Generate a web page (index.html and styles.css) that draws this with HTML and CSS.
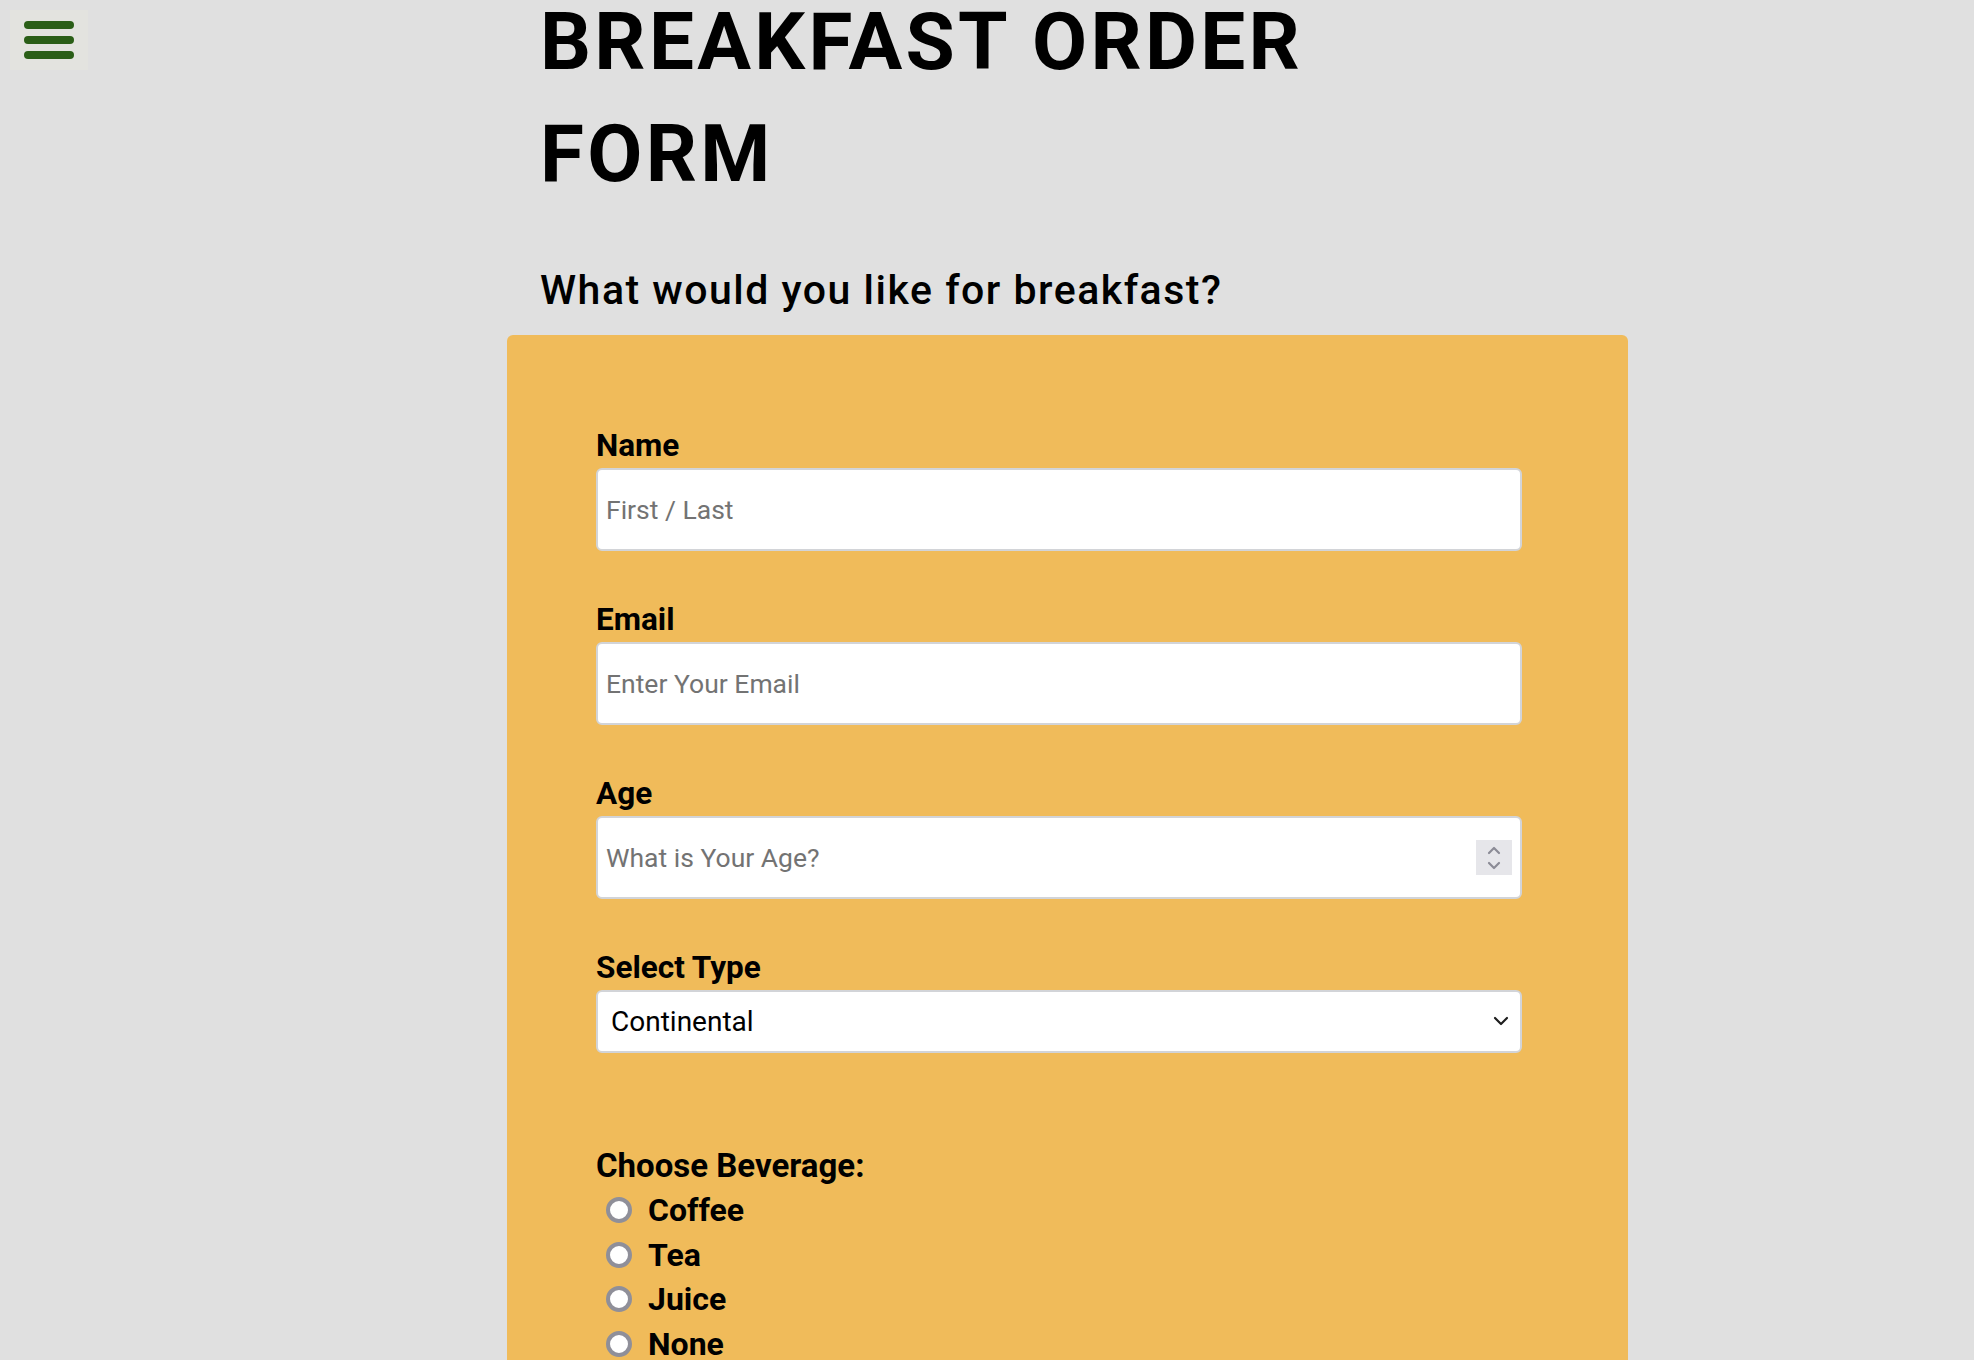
FILE: index.html
```html
<!DOCTYPE html>
<html lang="en">
<head>
<meta charset="utf-8">
<title>Breakfast Order Form</title>
<link rel="stylesheet" href="styles.css">
</head>
<body>
<button class="menu-btn" type="button" aria-label="Menu">
  <span class="menu-bar"></span>
  <span class="menu-bar"></span>
  <span class="menu-bar"></span>
</button>
<main class="page">
  <header class="intro">
    <h1 class="title">BREAKFAST ORDER FORM</h1>
    <h2 class="subtitle">What would you like for breakfast?</h2>
  </header>
  <form class="order-card">
    <div class="field">
      <label class="field-label" for="name">Name</label>
      <input class="text-input" id="name" type="text" placeholder="First / Last">
    </div>
    <div class="field">
      <label class="field-label" for="email">Email</label>
      <input class="text-input" id="email" type="email" placeholder="Enter Your Email">
    </div>
    <div class="field">
      <label class="field-label" for="age">Age</label>
      <div class="input-wrap">
        <input class="text-input number-input" id="age" type="number" placeholder="What is Your Age?">
        <span class="spinner" aria-hidden="true">
          <svg width="16" height="26" viewBox="0 0 16 26"><path d="M3 8 L8 3 L13 8 M3 18 L8 23 L13 18" fill="none" stroke="#8b8b96" stroke-width="2.2" stroke-linecap="round" stroke-linejoin="round"/></svg>
        </span>
      </div>
    </div>
    <div class="field">
      <label class="field-label" for="type">Select Type</label>
      <div class="input-wrap">
        <select class="select-input" id="type">
          <option>Continental</option>
          <option>American</option>
          <option>English</option>
        </select>
        <span class="select-arrow" aria-hidden="true">
          <svg width="16" height="10" viewBox="0 0 16 10"><path d="M2 2 L8 8 L14 2" fill="none" stroke="#1e1e1e" stroke-width="2.2" stroke-linecap="round" stroke-linejoin="round"/></svg>
        </span>
      </div>
    </div>
    <div class="choice-group">
      <p class="group-label">Choose Beverage:</p>
      <label class="choice"><input class="radio" type="radio" name="bev" value="coffee"><span>Coffee</span></label>
      <label class="choice"><input class="radio" type="radio" name="bev" value="tea"><span>Tea</span></label>
      <label class="choice"><input class="radio" type="radio" name="bev" value="juice"><span>Juice</span></label>
      <label class="choice"><input class="radio" type="radio" name="bev" value="none"><span>None</span></label>
    </div>
  </form>
</main>
</body>
</html>
```
FILE: styles.css
```css
* {
  box-sizing: border-box;
}

body {
  margin: 0;
  background: #e0e0e0;
  font-family: Roboto, "Noto Sans", "Liberation Sans", sans-serif;
  color: #000;
}

.menu-btn {
  position: fixed;
  top: 10px;
  left: 10px;
  width: 78px;
  height: 60px;
  padding: 11px 14px;
  border: none;
  background: #e3e3df;
  display: flex;
  flex-direction: column;
  justify-content: space-between;
}

.menu-bar {
  display: block;
  width: 50px;
  height: 8px;
  border-radius: 4px;
  background: #2a5e17;
}

.page {
  margin-left: 507px;
  width: 1121px;
}

.intro {
  padding-left: 33px;
}

.title {
  margin: -14px 0 0;
  max-width: 820px;
  font-size: 80px;
  line-height: 112px;
  font-weight: 700;
  letter-spacing: 3.3px;
}

.subtitle {
  margin: 56px 0 20px;
  font-size: 41px;
  line-height: 49px;
  font-weight: 500;
  letter-spacing: 1.5px;
}

.order-card {
  background: #f0bb5a;
  border-radius: 6px;
  padding: 93px 106px 300px 89px;
  display: flex;
  flex-direction: column;
  gap: 51px;
}

.field {
  display: flex;
  flex-direction: column;
}

.field-label {
  display: block;
  margin: 0 0 4px;
  font-size: 31.5px;
  line-height: 36px;
  font-weight: 700;
}

.group-label {
  margin: 0 0 4px;
  font-size: 33px;
  line-height: 36px;
  font-weight: 700;
}

.input-wrap {
  position: relative;
}

.text-input {
  display: block;
  width: 100%;
  height: 83px;
  padding: 0 8px;
  border: 2px solid #d2d4d8;
  border-radius: 6px;
  background: #fff;
  font-family: Roboto, "Noto Sans", sans-serif;
  font-size: 26.5px;
  color: #000;
  outline: none;
}

.text-input::placeholder {
  color: #737373;
}

.number-input {
  -moz-appearance: textfield;
}

.number-input::-webkit-inner-spin-button,
.number-input::-webkit-outer-spin-button {
  -webkit-appearance: none;
  margin: 0;
}

.spinner {
  position: absolute;
  right: 10px;
  top: 24px;
  width: 36px;
  height: 35px;
  background: #e6e6ea;
  display: flex;
  align-items: center;
  justify-content: center;
}

.select-input {
  display: block;
  width: 100%;
  height: 63px;
  padding: 0 13px;
  border: 2px solid #d2d4d8;
  border-radius: 6px;
  background: #fff;
  font-family: Roboto, "Noto Sans", sans-serif;
  font-size: 28px;
  color: #000;
  -webkit-appearance: none;
  appearance: none;
  outline: none;
}

.select-arrow {
  position: absolute;
  right: 13px;
  top: 26px;
  display: flex;
  pointer-events: none;
}

.choice-group {
  margin-top: 44px;
}

.choice {
  display: flex;
  align-items: center;
  height: 44.5px;
  font-size: 32px;
  font-weight: 700;
}

.radio {
  -webkit-appearance: none;
  appearance: none;
  width: 26px;
  height: 26px;
  margin: 0 16px 0 10px;
  border: 4px solid #8f8f99;
  border-radius: 50%;
  background: #fff;
}
```
